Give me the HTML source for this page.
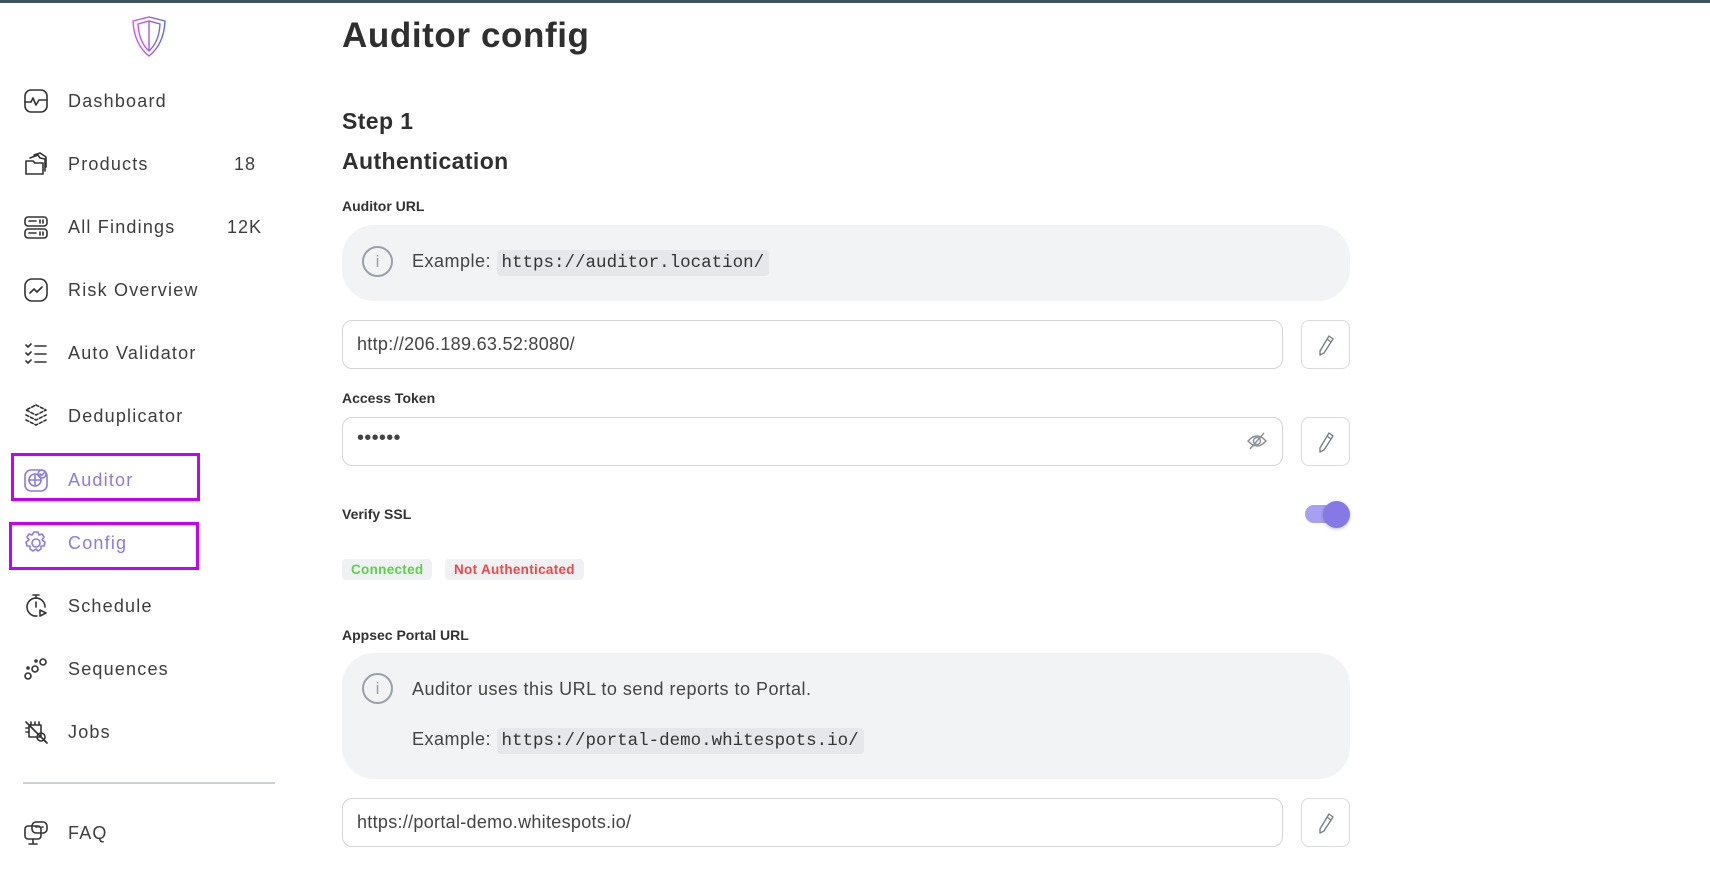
<!DOCTYPE html>
<html><head><meta charset="utf-8"><style>
*{box-sizing:border-box;margin:0;padding:0}
body{width:1710px;height:873px;overflow:hidden;background:#fff;font-family:"Liberation Sans",sans-serif;color:#333;position:relative}
.top{position:absolute;left:0;top:0;width:1710px;height:3px;background:#3f525d}
.nav{position:absolute;left:23px;height:30px;display:flex;align-items:center;font-size:18px;color:#3d3d3d;letter-spacing:1.2px}
.nav svg{width:26px;height:26px;margin-right:19px;fill:none;stroke:#333;stroke-width:1.6;stroke-linecap:round;stroke-linejoin:round}
.nav.act{color:#8a7be8}.nav.act svg{stroke:#8a7be8}
.cnt{position:absolute;left:0;width:256px;text-align:right;font-size:18px;color:#3d3d3d;letter-spacing:1px}
.hl{position:absolute;border:3px solid #c400ff}
.a{position:absolute}
.lbl{position:absolute;left:342px;font-size:14px;color:#333;font-weight:bold}
.info{position:absolute;left:342px;width:1008px;background:#f2f3f5;border-radius:32px}
.ic{position:absolute;width:31px;height:31px;border:2px solid #9aa0aa;border-radius:50%;color:#9aa0aa;font-size:17px;text-align:center;line-height:27px}
.code{font-family:"Liberation Mono",monospace;background:#e6e7ea;padding:3px 5px;border-radius:4px;color:#333;font-size:17.5px}
.inp{position:absolute;left:342px;width:941px;height:49px;border:1px solid #d4d5da;border-radius:10px;font-size:18px;color:#444;padding-left:14px;line-height:47px;letter-spacing:.3px}
.pen{position:absolute;left:1301px;width:49px;height:49px;border:1px solid #d9dadf;border-radius:8px}
.pen svg,.eye{position:absolute}
.badge{position:absolute;top:559px;height:21px;background:#f0f1f3;border-radius:4px;font-size:13.5px;font-weight:bold;line-height:21px;padding:0 9px;letter-spacing:.3px}
.txt{letter-spacing:.5px}
</style></head><body>
<div class="top"></div>
<svg class="a" style="left:130px;top:16px" width="38" height="42" viewBox="0 0 38 42"><defs><linearGradient id="g" x1="0" x2="1"><stop offset="0" stop-color="#e14df0"/><stop offset="1" stop-color="#5a6cf0"/></linearGradient></defs><path d="M3 5 L19 1 L35 5 Q34 28 19 40 Q4 28 3 5Z M8 8 L19 5 L30 8 Q29 26 19 35 Q9 26 8 8Z M19 5 L19 35" fill="none" stroke="url(#g)" stroke-width="1.4"/></svg>

<div class="nav" style="top:86px"><svg viewBox="0 0 26 26"><rect x="2" y="2" width="22" height="22" rx="6"/><path d="M2 14h6l2-4 3 7 3-5h8"/></svg>Dashboard</div>
<div class="nav" style="top:149px"><svg viewBox="0 0 26 26"><path d="M3 10h7l2 2h8v11H3z"/><path d="M7 7l8-3 2 3 5 1v12M11 4l6-2 6 4v10"/></svg>Products</div>
<div class="cnt" style="top:154px">18</div>
<div class="nav" style="top:212px"><svg viewBox="0 0 26 26"><rect x="2" y="3" width="22" height="9" rx="3"/><rect x="2" y="15" width="22" height="9" rx="3"/><path d="M6 7h7M17 6v3M20 6v3M6 19h7M17 18v3M20 18v3"/></svg>All Findings</div>
<div class="cnt" style="top:217px;left:6px">12K</div>
<div class="nav" style="top:275px"><svg viewBox="0 0 26 26"><rect x="2" y="2" width="22" height="22" rx="7"/><path d="M7 16l4-4 3 3 5-5"/></svg>Risk Overview</div>
<div class="nav" style="top:338px"><svg viewBox="0 0 26 26"><path d="M3 5l2 2 3-3M3 13l2 2 3-3M3 21l2 2 3-3M12 6h11M12 14h11M12 22h11"/></svg>Auto Validator</div>
<div class="nav" style="top:401px"><svg viewBox="0 0 26 26"><path d="M13 2l10 5-10 5-10-5z M3 12l10 5 10-5 M3 17l10 5 10-5" stroke-dasharray="3 2"/></svg>Deduplicator</div>
<div class="hl" style="left:11px;top:453px;width:189px;height:48px"></div>
<div class="nav act" style="top:465px"><svg viewBox="0 0 26 26"><rect x="2" y="3" width="22" height="21" rx="6"/><circle cx="12" cy="13" r="6"/><path d="M6 13h12M12 7v12"/><circle cx="19" cy="7" r="4"/><path d="M17 7l1.5 1.5L21 6"/></svg>Auditor</div>
<div class="hl" style="left:9px;top:522px;width:190px;height:48px"></div>
<div class="nav act" style="top:528px"><svg viewBox="0 0 26 26"><path d="M11 2h4l1 3 3-1 2 3-2 3 3 2-1 4-3 0 0 3-3 2-2-2-3 2-3-2 0-3-3 0-1-4 3-2-2-3 2-3 3 1z"/><circle cx="13" cy="13" r="4"/></svg>Config</div>
<div class="nav" style="top:591px"><svg viewBox="0 0 26 26"><path d="M10 2h6M13 2v3"/><path d="M22 14a9 9 0 1 0-8 9"/><path d="M13 9v5"/><path d="M17 17l6 3-6 3z"/></svg>Schedule</div>
<div class="nav" style="top:654px"><svg viewBox="0 0 26 26"><circle cx="5" cy="20" r="3"/><circle cx="12" cy="13" r="3"/><circle cx="20" cy="6" r="3"/><circle cx="5" cy="12" r="1"/><circle cx="13" cy="5" r="1"/></svg>Sequences</div>
<div class="nav" style="top:717px"><svg viewBox="0 0 26 26"><path d="M6 6h12v12H6z M3 3l20 20 M8 3v3M12 3v3M16 3v3M3 9h3M3 13h3"/><circle cx="18" cy="18" r="4"/><path d="M21 21l3 3"/></svg>Jobs</div>
<div class="a" style="left:23px;top:782px;width:252px;height:2px;background:#cdd0d6"></div>
<div class="nav" style="top:818px"><svg viewBox="0 0 26 26"><rect x="2" y="6" width="16" height="13" rx="3"/><path d="M10 19v5M6 24h8"/><rect x="9" y="2" width="15" height="11" rx="4"/><path d="M13 7h1M16 7h1M19 7h1"/></svg>FAQ</div>

<div class="a" style="left:342px;top:16px;font-size:35px;font-weight:bold;color:#2f2f2f;letter-spacing:.6px">Auditor config</div>
<div class="a" style="left:342px;top:108px;font-size:23px;font-weight:bold;color:#2f2f2f;letter-spacing:.4px">Step 1</div>
<div class="a" style="left:342px;top:148px;font-size:23px;font-weight:bold;color:#2f2f2f;letter-spacing:.4px">Authentication</div>

<div class="lbl" style="top:198px">Auditor URL</div>
<div class="info" style="top:225px;height:76px">
 <div class="ic" style="left:20px;top:21px">i</div>
 <div class="a txt" style="left:70px;top:26px;font-size:18px;color:#444">Example: <span class="code" style="letter-spacing:0">https://auditor.location/</span></div>
</div>
<div class="inp" style="top:320px">http://206.189.63.52:8080/</div>
<div class="pen" style="top:320px"><svg style="left:15px;top:13px" width="18" height="22" viewBox="0 0 18 22"><path d="M12 2l4 3-9 14-4 2 0-4z M10 5l4 3" fill="none" stroke="#7a7e86" stroke-width="1.4" stroke-linejoin="round"/></svg></div>

<div class="lbl" style="top:390px">Access Token</div>
<div class="inp" style="top:417px;line-height:40px;font-size:20px">••••••</div>
<svg class="eye" style="left:1246px;top:430px" width="22" height="22" viewBox="0 0 22 22"><path d="M2 11q9-10 18 0q-9 10-18 0z M18 3L4 19" fill="none" stroke="#8a8e96" stroke-width="1.4"/><circle cx="11" cy="11" r="3.5" fill="none" stroke="#8a8e96" stroke-width="1.4"/></svg>
<div class="pen" style="top:417px"><svg style="left:15px;top:13px" width="18" height="22" viewBox="0 0 18 22"><path d="M12 2l4 3-9 14-4 2 0-4z M10 5l4 3" fill="none" stroke="#7a7e86" stroke-width="1.4" stroke-linejoin="round"/></svg></div>

<div class="lbl" style="top:506px">Verify SSL</div>
<div class="a" style="left:1305px;top:505px;width:40px;height:18px;border-radius:9px;background:#a79ff0"></div>
<div class="a" style="left:1323px;top:501px;width:27px;height:27px;border-radius:50%;background:#8679e6;box-shadow:0 1px 3px rgba(0,0,0,.25)"></div>

<div class="badge" style="left:342px;color:#5fd04a">Connected</div>
<div class="badge" style="left:445px;color:#f04848">Not Authenticated</div>

<div class="lbl" style="top:627px">Appsec Portal URL</div>
<div class="info" style="top:653px;height:126px">
 <div class="ic" style="left:20px;top:20px">i</div>
 <div class="a txt" style="left:70px;top:26px;font-size:18px;color:#444">Auditor uses this URL to send reports to Portal.</div>
 <div class="a txt" style="left:70px;top:76px;font-size:18px;color:#444">Example: <span class="code" style="letter-spacing:0">https://portal-demo.whitespots.io/</span></div>
</div>
<div class="inp" style="top:798px">https://portal-demo.whitespots.io/</div>
<div class="pen" style="top:798px"><svg style="left:15px;top:13px" width="18" height="22" viewBox="0 0 18 22"><path d="M12 2l4 3-9 14-4 2 0-4z M10 5l4 3" fill="none" stroke="#7a7e86" stroke-width="1.4" stroke-linejoin="round"/></svg></div>
</body></html>
